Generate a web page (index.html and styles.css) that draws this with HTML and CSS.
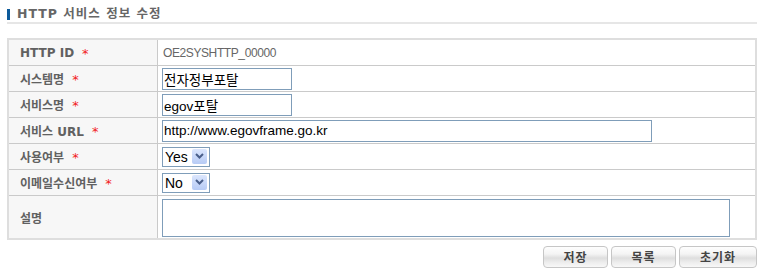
FILE: index.html
```html
<!DOCTYPE html>
<html lang="ko">
<head>
<meta charset="utf-8">
<title>HTTP 서비스 정보 수정</title>
<link rel="stylesheet" href="styles.css">
</head>
<body>
<div class="page">
  <h2 class="title">HTTP 서비스 정보 수정</h2>
  <div class="form">
    <div class="th">HTTP ID<span class="req">*</span></div>
    <div class="td"><span class="val">OE2SYSHTTP_00000</span></div>

    <div class="th">시스템명<span class="req">*</span></div>
    <div class="td"><input class="inp w130" type="text" value="전자정부포탈"></div>

    <div class="th">서비스명<span class="req">*</span></div>
    <div class="td"><input class="inp w130" type="text" value="egov포탈"></div>

    <div class="th">서비스 URL<span class="req">*</span></div>
    <div class="td"><input class="inp w490" type="text" value="http://www.egovframe.go.kr"></div>

    <div class="th">사용여부<span class="req">*</span></div>
    <div class="td">
      <span class="sel">
        <select><option>Yes</option><option>No</option></select>
        <span class="arrow"><svg width="9" height="6" viewBox="0 0 9 6"><path d="M1 1 L4.5 4.5 L8 1" fill="none" stroke="#4a5f8a" stroke-width="2"/></svg></span>
      </span>
    </div>

    <div class="th">이메일수신여부<span class="req">*</span></div>
    <div class="td">
      <span class="sel">
        <select><option>No</option><option>Yes</option></select>
        <span class="arrow"><svg width="9" height="6" viewBox="0 0 9 6"><path d="M1 1 L4.5 4.5 L8 1" fill="none" stroke="#4a5f8a" stroke-width="2"/></svg></span>
      </span>
    </div>

    <div class="th last">설명</div>
    <div class="td last"><textarea class="area"></textarea></div>
  </div>
  <div class="buttons">
    <button class="btn">저장</button>
    <button class="btn">목록</button>
    <button class="btn wide">초기화</button>
  </div>
</div>
</body>
</html>
```
FILE: styles.css
```css
html, body {
  margin: 0;
  padding: 0;
  background: #ffffff;
}
.page {
  width: 750px;
  margin-left: 7px;
  font-family: "DejaVu Sans", "Noto Sans CJK KR", sans-serif;
}
.title {
  margin: 7px 0 0 0;
  height: 14px;
  padding-bottom: 1px;
  border-bottom: 2px solid #e6e6e6;
  font-size: 12.5px;
  line-height: 14px;
  font-weight: bold;
  color: #666666;
  letter-spacing: 1px;
  display: flex;
  align-items: center;
}
.title::before {
  content: "";
  display: block;
  width: 3px;
  height: 11px;
  background: #0c5a9a;
  margin-right: 7px;
}
.form {
  margin-top: 14px;
  display: grid;
  grid-template-columns: 149px 1fr;
  border: 2px solid #dedede;
  box-sizing: border-box;
  width: 750px;
}
.th, .td {
  height: 26px;
  box-sizing: border-box;
  border-bottom: 1px solid #cacaca;
  display: flex;
  align-items: center;
}
.th {
  background: #f7f7f7;
  border-right: 1px solid #cacaca;
  padding-left: 11px;
  font-size: 12px;
  font-weight: bold;
  color: #616161;
  white-space: nowrap;
}
.td {
  background: #ffffff;
  padding-left: 4px;
}
.th.last, .td.last {
  height: 42px;
  border-bottom: none;
}
.req {
  color: #f21c1c;
  font-weight: normal;
  font-size: 13px;
  margin-left: 8px;
  position: relative;
  top: 1px;
}
.val {
  margin-left: 1px;
  font-family: "Liberation Sans", sans-serif;
  font-size: 12px;
  letter-spacing: -0.4px;
  color: #666666;
}
.inp {
  height: 22px;
  box-sizing: border-box;
  border: 1px solid #7f9db9;
  padding: 0 1px;
  margin: 0;
  font-family: "Liberation Sans", "Noto Sans CJK KR", sans-serif;
  font-size: 13.5px;
  color: #000000;
  outline: none;
}
.w130 { width: 130px; }
.w490 { width: 490px; }
.sel {
  position: relative;
  display: inline-block;
  width: 48px;
  height: 20px;
}
.sel select {
  -webkit-appearance: none;
  appearance: none;
  width: 48px;
  height: 20px;
  box-sizing: border-box;
  border: 1px solid #7f9db9;
  border-radius: 0;
  background: #ffffff;
  padding: 0 0 0 2px;
  margin: 0;
  font-family: "Liberation Sans", sans-serif;
  font-size: 14px;
  color: #000000;
  outline: none;
}
.arrow {
  position: absolute;
  top: 2px;
  right: 3px;
  width: 15px;
  height: 15px;
  border-radius: 2px;
  background: linear-gradient(#dbe6fd, #b7cbf5);
  display: flex;
  align-items: center;
  justify-content: center;
  pointer-events: none;
}
.area {
  width: 568px;
  height: 38px;
  box-sizing: border-box;
  border: 1px solid #7f9db9;
  margin: 1px 0 0 0;
  padding: 2px;
  resize: none;
  outline: none;
}
.buttons {
  display: flex;
  justify-content: flex-end;
  gap: 3px;
  margin-top: 6px;
}
.btn {
  width: 65px;
  height: 22px;
  box-sizing: border-box;
  border: 1px solid #c6c6c6;
  border-radius: 4px;
  background: linear-gradient(#fefefe 0%, #f4f4f4 35%, #dedede 55%, #ececec 75%, #f8f8f8 100%);
  font-family: "Noto Sans CJK KR", sans-serif;
  font-size: 12px;
  font-weight: bold;
  color: #444444;
  letter-spacing: 1px;
  padding: 0;
  margin: 0;
  line-height: 20px;
}
.btn.wide {
  width: 78px;
}
```
